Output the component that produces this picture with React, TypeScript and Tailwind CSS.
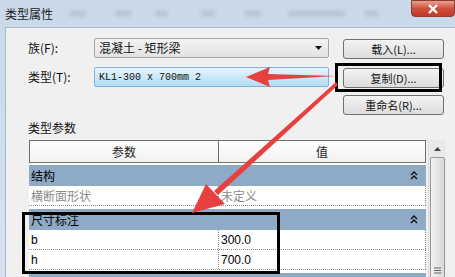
import React from "react";

const cjk = { fontFamily: '"Noto Sans CJK SC", "Liberation Sans", sans-serif' };
const mono = { fontFamily: '"Liberation Mono", monospace' };
const sans = { fontFamily: '"Liberation Sans", "Noto Sans CJK SC", sans-serif' };

function Btn({ children }: { children: React.ReactNode }) {
  return (
    <div
      className="w-[101px] h-[20px] rounded-[3px] border border-[#707070] bg-gradient-to-b from-[#f4f4f4] to-[#dcdcdc] flex items-center justify-center text-[11px] text-[#111] leading-none"
      style={cjk}
    >
      {children}
    </div>
  );
}

function Chevron() {
  return (
    <svg width="8" height="9" viewBox="0 0 8 9" className="mr-[8px]">
      <path d="M1 4 L4 1 L7 4 M1 8 L4 5 L7 8" stroke="#111" strokeWidth="1.4" fill="none" />
    </svg>
  );
}

function Group({ label }: { label: string }) {
  return (
    <div className="h-[21px] bg-[#8faac7] flex items-center justify-between pl-[2px] text-[12px] text-black" style={cjk}>
      <span>{label}</span>
      <Chevron />
    </div>
  );
}

function Row({ a, b, gray }: { a: string; b: string; gray?: boolean }) {
  return (
    <div className="h-[20px] flex border-b border-dotted border-[#8a8a8a] bg-white">
      <div
        className={`w-[190px] flex items-center pl-[2px] text-[12px] border-r border-dotted border-[#8a8a8a] ${gray ? "text-[#8a8a8a]" : "text-black"}`}
        style={gray ? cjk : sans}
      >
        {a}
      </div>
      <div
        className={`flex-1 flex items-center pl-[2px] text-[12px] border-r border-dotted border-[#8a8a8a] ${gray ? "text-[#8a8a8a]" : "text-black"}`}
        style={gray ? cjk : sans}
      >
        {b}
      </div>
    </div>
  );
}

export default function App() {
  return (
    <div className="relative w-[455px] h-[277px] overflow-hidden bg-gradient-to-b from-[#c9d9e9] to-[#d6e3ef] flex flex-col">
      {/* title bar */}
      <div className="relative h-[27px] flex items-center pl-[5px] shrink-0">
        <span className="text-[12px] text-[#222]" style={cjk}>类型属性</span>
        <div className="flex items-center ml-[17px]">
          <span className="block w-[16px] h-[5px] bg-[#8c9cac] blur-[2px] opacity-40" />
          <span className="block w-[16px] h-[5px] ml-[29px] bg-[#8c9cac] blur-[2px] opacity-40" />
          <span className="block w-[13px] h-[5px] ml-[24px] bg-[#8c9cac] blur-[2px] opacity-40" />
          <span className="block w-[14px] h-[5px] ml-[33px] bg-[#8c9cac] blur-[2px] opacity-40" />
          <span className="block w-[16px] h-[5px] ml-[30px] bg-[#8c9cac] blur-[2px] opacity-40" />
          <span className="block w-[57px] h-[5px] ml-[27px] bg-[#8c9cac] blur-[2px] opacity-40" />
          <span className="block w-[13px] h-[5px] ml-[20px] bg-[#8c9cac] blur-[2px] opacity-40" />
        </div>
        <div className="absolute right-0 top-0 w-[44px] h-[17px] rounded-b-[4px] border border-[#8b3a30] bg-gradient-to-b from-[#e6a090] via-[#cf4f3d] to-[#c33a2a] flex items-center justify-center">
          <svg width="12" height="10" viewBox="0 0 12 10">
            <path d="M2 1 L10 9 M10 1 L2 9" stroke="#fff" strokeWidth="2.4" />
          </svg>
        </div>
      </div>

      {/* content */}
      <div className="flex-1 ml-[5px] bg-[#f0f0f0] border-t border-l border-[#a9b8c8] pl-[22px] pt-[10px]">
        {/* row 1 */}
        <div className="flex items-center h-[20px]">
          <div className="w-[66px] text-[12px] text-[#111]" style={cjk}>族(F):</div>
          <div className="w-[235px] h-[20px] rounded-[2px] border border-[#a5a5a5] bg-gradient-to-b from-[#f4f4f4] to-[#e2e2e2] flex items-center justify-between pl-[4px] pr-[6px]">
            <span className="text-[12px] text-[#111]" style={cjk}>混凝土 - 矩形梁</span>
            <svg width="7" height="4" viewBox="0 0 7 4"><path d="M0 0 L7 0 L3.5 4 Z" fill="#111" /></svg>
          </div>
          <div className="ml-[14px] mt-[2px]"><Btn>载入(L)...</Btn></div>
        </div>
        {/* row 2 */}
        <div className="flex items-center h-[20px] mt-[9px]">
          <div className="w-[66px] text-[12px] text-[#111]" style={cjk}>类型(T):</div>
          <div className="w-[235px] h-[20px] rounded-[2px] border border-[#7fb1e0] bg-gradient-to-b from-[#e6f4fc] to-[#b4dcf4] flex items-center pl-[4px]">
            <span className="text-[10px] text-[#111]" style={mono}>KL1-300 x 700mm 2</span>
          </div>
          <div className="ml-[14px] mt-[2px]"><Btn>复制(D)...</Btn></div>
        </div>
        {/* row 3 */}
        <div className="flex mt-[8px] ml-[315px]">
          <Btn>重命名(R)...</Btn>
        </div>
        <div className="mt-[5px] h-[16px] leading-[16px] text-[12px] text-[#111]" style={cjk}>类型参数</div>

        {/* table */}
        <div className="mt-[4px] ml-[1px] flex">
          <div className="w-[397px] flex flex-col bg-white">
            <div className="h-[23px] flex border border-[#6e6e6e] bg-gradient-to-b from-[#ffffff] to-[#f1f1f1]">
              <div className="w-[189px] border-r border-[#6e6e6e] flex items-center justify-center text-[12px] text-[#222]" style={cjk}>参数</div>
              <div className="flex-1 flex items-center justify-center text-[12px] text-[#222]" style={cjk}>值</div>
            </div>
            <div className="h-[2px]" />
            <Group label="结构" />
            <Row a="横断面形状" b="未定义" gray />
            <div className="h-[3px]" />
            <Group label="尺寸标注" />
            <Row a="b" b="300.0" />
            <Row a="h" b="700.0" />
            <div className="h-[3px]" />
            <div className="h-[21px] bg-[#8faac7]" />
          </div>
          <div className="ml-[2px] w-[18px] bg-[#e9e9e9] border-l border-[#dcdcdc] flex flex-col items-center">
            <svg width="7" height="4" viewBox="0 0 7 4" className="mt-[7px]"><path d="M0 4 L7 4 L3.5 0 Z" fill="#444" /></svg>
            <div className="mt-[6px] w-[15px] h-[130px] rounded-[2px] border border-[#9a9a9a] bg-gradient-to-r from-[#f2f2f2] to-[#d8d8d8] flex items-end justify-center pb-[12px]">
              <svg width="7" height="7" viewBox="0 0 7 7"><path d="M0 1 H7 M0 3.5 H7 M0 6 H7" stroke="#666" strokeWidth="1" /></svg>
            </div>
          </div>
        </div>
      </div>

      {/* annotations */}
      <div className="absolute left-[335px] top-[63px] w-[107px] h-[29px] border-[3px] border-black" />
      <div className="absolute left-[22px] top-[212px] w-[258px] h-[62px] border-[3px] border-black" />
      <svg className="absolute left-0 top-0" width="455" height="277" viewBox="0 0 455 277">
        <polygon points="246,77 270,67 268,74 336,76 268,80 270,87" fill="#e8403f" />
        <polygon points="336,82 338,85 218,195 214,191" fill="#e8403f" />
        <polygon points="192,213 206,184 225,204" fill="#e8403f" />
      </svg>
    </div>
  );
}
